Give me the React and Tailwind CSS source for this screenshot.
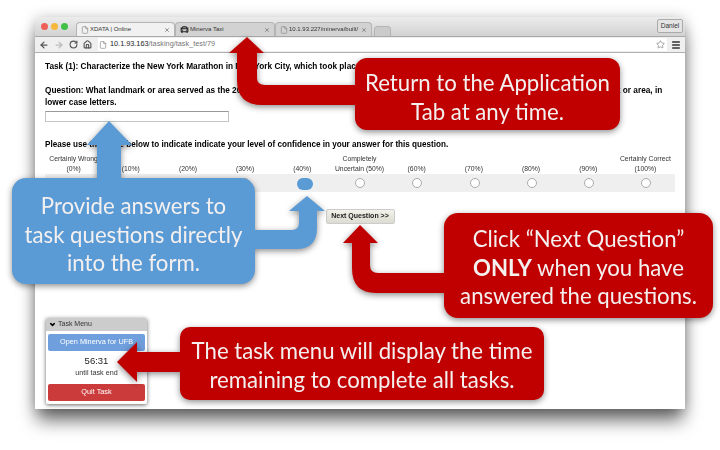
import { ArrowLeft, ArrowRight, CarFront, ChevronDown, File, House, Menu, RotateCw, Star, X } from "lucide-react";

const levels = [
  ["Certainly Wrong", "(0%)"],
  ["", "(10%)"],
  ["", "(20%)"],
  ["", "(30%)"],
  ["", "(40%)"],
  ["Completely", "Uncertain (50%)"],
  ["", "(60%)"],
  ["", "(70%)"],
  ["", "(80%)"],
  ["", "(90%)"],
  ["Certainly Correct", "(100%)"],
];

function Tab({ icon, title, active, className }) {
  return (
    <div
      className={`flex items-center gap-[1px] h-[14px] pl-[4px] pr-[4px] rounded-t-[4px] border border-b-0 border-[#b4b4b4] ${active ? "bg-[#f1f1f1]" : "bg-[#d2d2d2]"} ${className}`}
    >
      {icon}
      <span className="flex-1 whitespace-nowrap text-[6px] text-[#333]">{title}</span>
      <X className="w-[6px] h-[6px] text-[#777]" strokeWidth={3} />
    </div>
  );
}

function Arrow({ d, fill }) {
  return (
    <svg className="absolute inset-0" width="720" height="450" viewBox="0 0 720 450">
      <path d={d} fill={fill} />
    </svg>
  );
}

export default function App() {
  return (
    <div className="relative w-[720px] h-[450px] bg-white overflow-hidden font-['Liberation_Sans',Arial,sans-serif]">
      {/* browser window */}
      <div className="absolute left-[35px] top-[17px] w-[650px] h-[392px] flex flex-col bg-white shadow-[0_13px_18px_-2px_rgba(0,0,0,0.6),0_0_14px_rgba(0,0,0,0.2)] rounded-t-[4px] blur-[0.3px]">
        <div className="flex items-end h-[20px] pl-[6px] pr-[2px] rounded-t-[4px] bg-gradient-to-b from-[#ececec] to-[#d2d2d2] border-b border-[#a8a8a8]">
          <div className="flex items-center gap-[3px] self-start mt-[6px] mr-[8px]">
            <div className="w-[7px] h-[7px] rounded-full bg-[#ee5f57]" />
            <div className="w-[7px] h-[7px] rounded-full bg-[#f5b83a]" />
            <div className="w-[7px] h-[7px] rounded-full bg-[#3ec146]" />
          </div>
          <Tab active title="XDATA | Online" className="w-[99px]" icon={<File className="w-[8px] h-[8px] text-[#888]" />} />
          <Tab title="Minerva Taxi" className="w-[100px]" icon={<CarFront className="w-[9px] h-[9px] text-[#222]" strokeWidth={3} />} />
          <Tab title="10.1.93.227/minerva/built/" className="w-[97px]" icon={<File className="w-[8px] h-[8px] text-[#888]" />} />
          <div className="w-[17px] h-[10px] ml-[2px] rounded-t-[4px] bg-[#cbcbcb] border border-b-0 border-[#b4b4b4]" />
          <div className="ml-auto self-start mt-[2px] w-[26px] h-[14px] flex items-center justify-center rounded-[2px] border border-[#aaa] bg-[#e4e4e4] text-[6.5px] text-[#333]">
            Daniel
          </div>
        </div>
        <div className="flex items-center h-[16px] pl-[3px] pr-[3px] bg-[#efefef] border-b border-[#b0b0b0]">
          <ArrowLeft className="w-[10px] h-[10px] text-[#555] ml-[1px]" strokeWidth={3} />
          <ArrowRight className="w-[10px] h-[10px] text-[#bbb] ml-[5px]" strokeWidth={3} />
          <RotateCw className="w-[9px] h-[9px] text-[#555] ml-[5px]" strokeWidth={3} />
          <House className="w-[9px] h-[9px] text-[#555] ml-[5px]" strokeWidth={3} />
          <div className="flex items-center flex-1 h-[13px] ml-[6px] pl-[1px] bg-white text-[7.3px]">
            <File className="w-[8px] h-[8px] text-[#888] mr-[1px]" />
            <span className="ml-[2px] text-[#222]">10.1.93.163</span>
            <span className="text-[#777]">/tasking/task_test/79</span>
            <Star className="w-[9px] h-[9px] text-[#888] ml-auto mr-[2px]" />
          </div>
          <Menu className="w-[10px] h-[10px] text-[#333] ml-[4px] mr-[1px]" strokeWidth={3.5} />
        </div>

        {/* page */}
        <div className="flex-1 flex flex-col pl-[10px] pr-[10px] text-black">
          <p className="mt-[8px] text-[8.25px] leading-[11px] font-bold">
            Task (1): Characterize the New York Marathon in New York City, which took place on November 3, 2013.
          </p>
          <p className="mt-[13px] text-[8.25px] leading-[12px] font-bold whitespace-nowrap">
            Question: What landmark or area served as the 2013 New York Marathon finish line? Using the form, please enter the name of the correct landmark or area, in
            <br />
            lower case letters.
          </p>
          <div className="w-[184px] h-[11px] mt-[2px] border border-[#c4c4c4] border-t-[#999]" />
          <p className="mt-[17px] text-[8.15px] leading-[11px] font-bold">
            Please use the scale below to indicate indicate your level of confidence in your answer for this question.
          </p>
          <div className="grid grid-cols-11 mt-[4px] w-[629px] text-[6.8px] leading-[10px] text-center text-[#333]">
            {levels.map(([top, bottom]) => (
              <div key={bottom} className="flex flex-col">
                <span className="h-[10px] whitespace-nowrap">{top}</span>
                <span className="whitespace-nowrap">{bottom}</span>
              </div>
            ))}
          </div>
          <div className="grid grid-cols-11 items-center w-[630px] h-[18px] bg-[#efefef]">
            {levels.map(([, bottom]) => (
              <div key={bottom} className="flex justify-center">
                <div className="w-[10px] h-[10px] rounded-full bg-white border border-[#aaa]" />
              </div>
            ))}
          </div>
          <button className="self-center w-[69px] h-[15px] mt-[17px] rounded-[2px] border border-[#ccc] bg-gradient-to-b from-[#f2f2ea] to-[#dcdcd2] text-[7px] font-bold text-[#222]">
            Next Question &gt;&gt;
          </button>

          <div className="mt-auto mb-[5px] ml-[1px] w-[101px] h-[86px] flex flex-col rounded-[2px] bg-white shadow-[0_1px_4px_rgba(0,0,0,0.6)] text-[#333]">
            <div className="flex items-center gap-[2px] h-[13px] pl-[3px] rounded-t-[2px] bg-[#cccccc] text-[7px]">
              <ChevronDown className="w-[7px] h-[7px] text-black" strokeWidth={5} />
              Task Menu
            </div>
            <div className="flex flex-col flex-1 px-[2px] pt-[3px] pb-[3px] text-center">
              <div className="flex items-center justify-center h-[17px] rounded-[2px] bg-[#6f9fdc] text-[7.3px] text-white">
                Open Minerva for UFB
              </div>
              <div className="mt-[4px] text-[9.5px] leading-[12px] text-[#222]">56:31</div>
              <div className="mt-[1px] text-[7.2px] leading-[9px]">until task end</div>
              <div className="flex items-center justify-center h-[17px] mt-auto rounded-[2px] bg-[#cc3b3b] text-[7.3px] text-white">
                Quit Task
              </div>
            </div>
          </div>
        </div>
      </div>

      {/* annotation callouts */}
      <div className="absolute inset-0 font-['Lato',sans-serif] text-[22.2px] leading-[28.5px] text-center text-[#f4f0f0]">
        <div className="absolute left-[297px] top-[178px] w-[16px] h-[12px] rounded-full bg-[#5b9bd5]" />
        <div className="absolute inset-0 drop-shadow-[0_2px_3px_rgba(0,0,0,0.45)]">
          <Arrow
            fill="#5b9bd5"
            d="M109 121 L132 145 L121 145 L121 182 L97 182 L97 145 L87 145 Z M307 196 L325 211 L317 211 L317 228 Q317 249 296 249 L250 249 L250 230 L292 230 Q299 230 299 223 L299 211 L289 211 Z"
          />
          <div className="absolute left-[12px] top-[178px] w-[243px] h-[106px] pt-[14px] rounded-[14px] bg-[#5b9bd5]">
            Provide answers to
            <br />
            task questions directly
            <br />
            into the form.
          </div>
        </div>
        <div className="absolute inset-0 drop-shadow-[0_2px_3px_rgba(0,0,0,0.45)]">
          <Arrow
            fill="#c00000"
            d="M247 37 L264 53 L257 53 L257 78 Q257 85 265 85 L360 85 L360 105 L262 105 Q237 105 237 80 L237 53 L229 53 Z"
          />
          <div className="absolute left-[355px] top-[58px] w-[265px] h-[72px] pt-[11px] rounded-[12px] bg-[#c00000]">
            Return to the Application
            <br />
            Tab at any time.
          </div>
        </div>
        <div className="absolute inset-0 drop-shadow-[0_2px_3px_rgba(0,0,0,0.45)]">
          <Arrow
            fill="#c00000"
            d="M360 225 L378 243 L370 243 L370 265 Q370 273 378 273 L450 273 L450 293 L376 293 Q352 293 352 268 L352 243 L343 243 Z"
          />
          <div className="absolute left-[444px] top-[213px] w-[269px] h-[105px] pt-[12px] rounded-[14px] bg-[#c00000]">
            Click “Next Question”
            <br />
            <b>ONLY</b> when you have
            <br />
            answered the questions.
          </div>
        </div>
        <div className="absolute inset-0 drop-shadow-[0_2px_3px_rgba(0,0,0,0.45)]">
          <Arrow fill="#c00000" d="M117 362 L137 342 L137 352 L185 352 L185 372 L137 372 L137 382 Z" />
          <div className="absolute left-[180px] top-[327px] w-[364px] h-[73px] pt-[10px] rounded-[10px] bg-[#c00000]">
            The task menu will display the time
            <br />
            remaining to complete all tasks.
          </div>
        </div>
      </div>
    </div>
  );
}
